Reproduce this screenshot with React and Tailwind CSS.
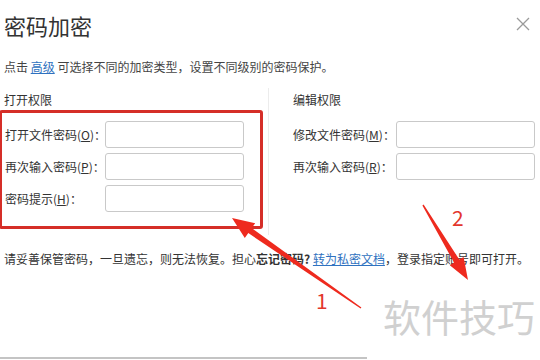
import React from "react";

const font = { fontFamily: '"Noto Sans CJK SC", "Liberation Sans", sans-serif' };

const Field = ({ label, hotkey, labelWidth }) => (
  <div className="flex items-center h-[27px]">
    <span className={`${labelWidth} text-[12px] leading-[16px] text-[#333] whitespace-nowrap`}>
      {label}(<span className="underline">{hotkey}</span>)：
    </span>
    <div className="w-[139px] h-[27px] border border-[#c9c9c9] rounded-[3px] bg-white" />
  </div>
);

const Arrows = () => (
  <svg className="absolute left-0 top-0 pointer-events-none" width="540" height="360" viewBox="0 0 540 360">
    {/* arrow 1 */}
    <polygon
      points="232,218 255.2,223.2 251.7,228.1 361.4,307.4 360.6,308.6 248.3,233.1 244.8,238"
      fill="#ee2a1e"
    />
    {/* arrow 2 */}
    <polygon
      points="468,280 449.8,265.2 454.1,262.6 422.4,205.4 423.6,204.6 459.3,259.6 463.6,257"
      fill="#ee2a1e"
    />
  </svg>
);

export default function App() {
  return (
    <div className="relative w-[540px] h-[360px] bg-white overflow-hidden flex flex-col" style={font}>
      {/* header */}
      <div className="flex items-center justify-between pl-[4px] pr-[10px] pt-[12px]">
        <h1 className="text-[22px] leading-[26px] text-[#333] font-normal">密码加密</h1>
        <svg width="14" height="14" viewBox="0 0 14 14" className="mt-[-2px]">
          <path d="M1 1L13 13M13 1L1 13" stroke="#9a9a9a" strokeWidth="1.3" fill="none" />
        </svg>
      </div>

      <p className="mt-[21px] pl-[4px] text-[12px] leading-[16px] text-[#444]">
        点击 <span className="text-[#2f72c0] underline">高级</span> 可选择不同的加密类型，设置不同级别的密码保护。
      </p>

      {/* permission sections */}
      <div className="flex mt-[17px]">
        <div className="w-[268px] flex flex-col">
          <div className="pl-[4px] text-[12px] leading-[16px] text-[#333]">打开权限</div>
          <div className="ml-[-1px] mt-[2px] w-[264px] border-[3px] border-[#d52e28] rounded-[3px] pl-[3px] pt-[8px] pb-[14px] flex flex-col gap-[5px]">
            <Field label="打开文件密码" hotkey="O" labelWidth="w-[100px]" />
            <Field label="再次输入密码" hotkey="P" labelWidth="w-[100px]" />
            <Field label="密码提示" hotkey="H" labelWidth="w-[100px]" />
          </div>
        </div>
        <div className="w-px bg-[#ececec] mt-[-4px] mb-[-6px]" />
        <div className="flex flex-col pl-[24px]">
          <div className="text-[12px] leading-[16px] text-[#333]">编辑权限</div>
          <div className="mt-[13px] flex flex-col gap-[5px]">
            <Field label="修改文件密码" hotkey="M" labelWidth="w-[103px]" />
            <Field label="再次输入密码" hotkey="R" labelWidth="w-[103px]" />
          </div>
        </div>
      </div>

      <p className="mt-[22px] pl-[4px] text-[12px] leading-[16px] text-[#333] whitespace-nowrap">
        请妥善保管密码，一旦遗忘，则无法恢复。担心<span className="font-bold">忘记密码?</span>{" "}
        <span className="text-[#2f72c0] underline">转为私密文档</span>，登录指定账号即可打开。
      </p>

      <div className="mt-auto mb-[1px] w-[367px] h-[2px] bg-[#c4c4c4]" />

      {/* overlays */}
      <div className="absolute left-[383px] top-[293px] text-[38px] leading-[46px] text-[#d0d0d0]">软件技巧</div>
      <Arrows />
      <div className="absolute left-[316px] top-[288px] text-[21px] leading-[24px] text-[#e3362c]">1</div>
      <div className="absolute left-[452px] top-[205px] text-[21px] leading-[24px] text-[#e3362c]">2</div>
    </div>
  );
}
